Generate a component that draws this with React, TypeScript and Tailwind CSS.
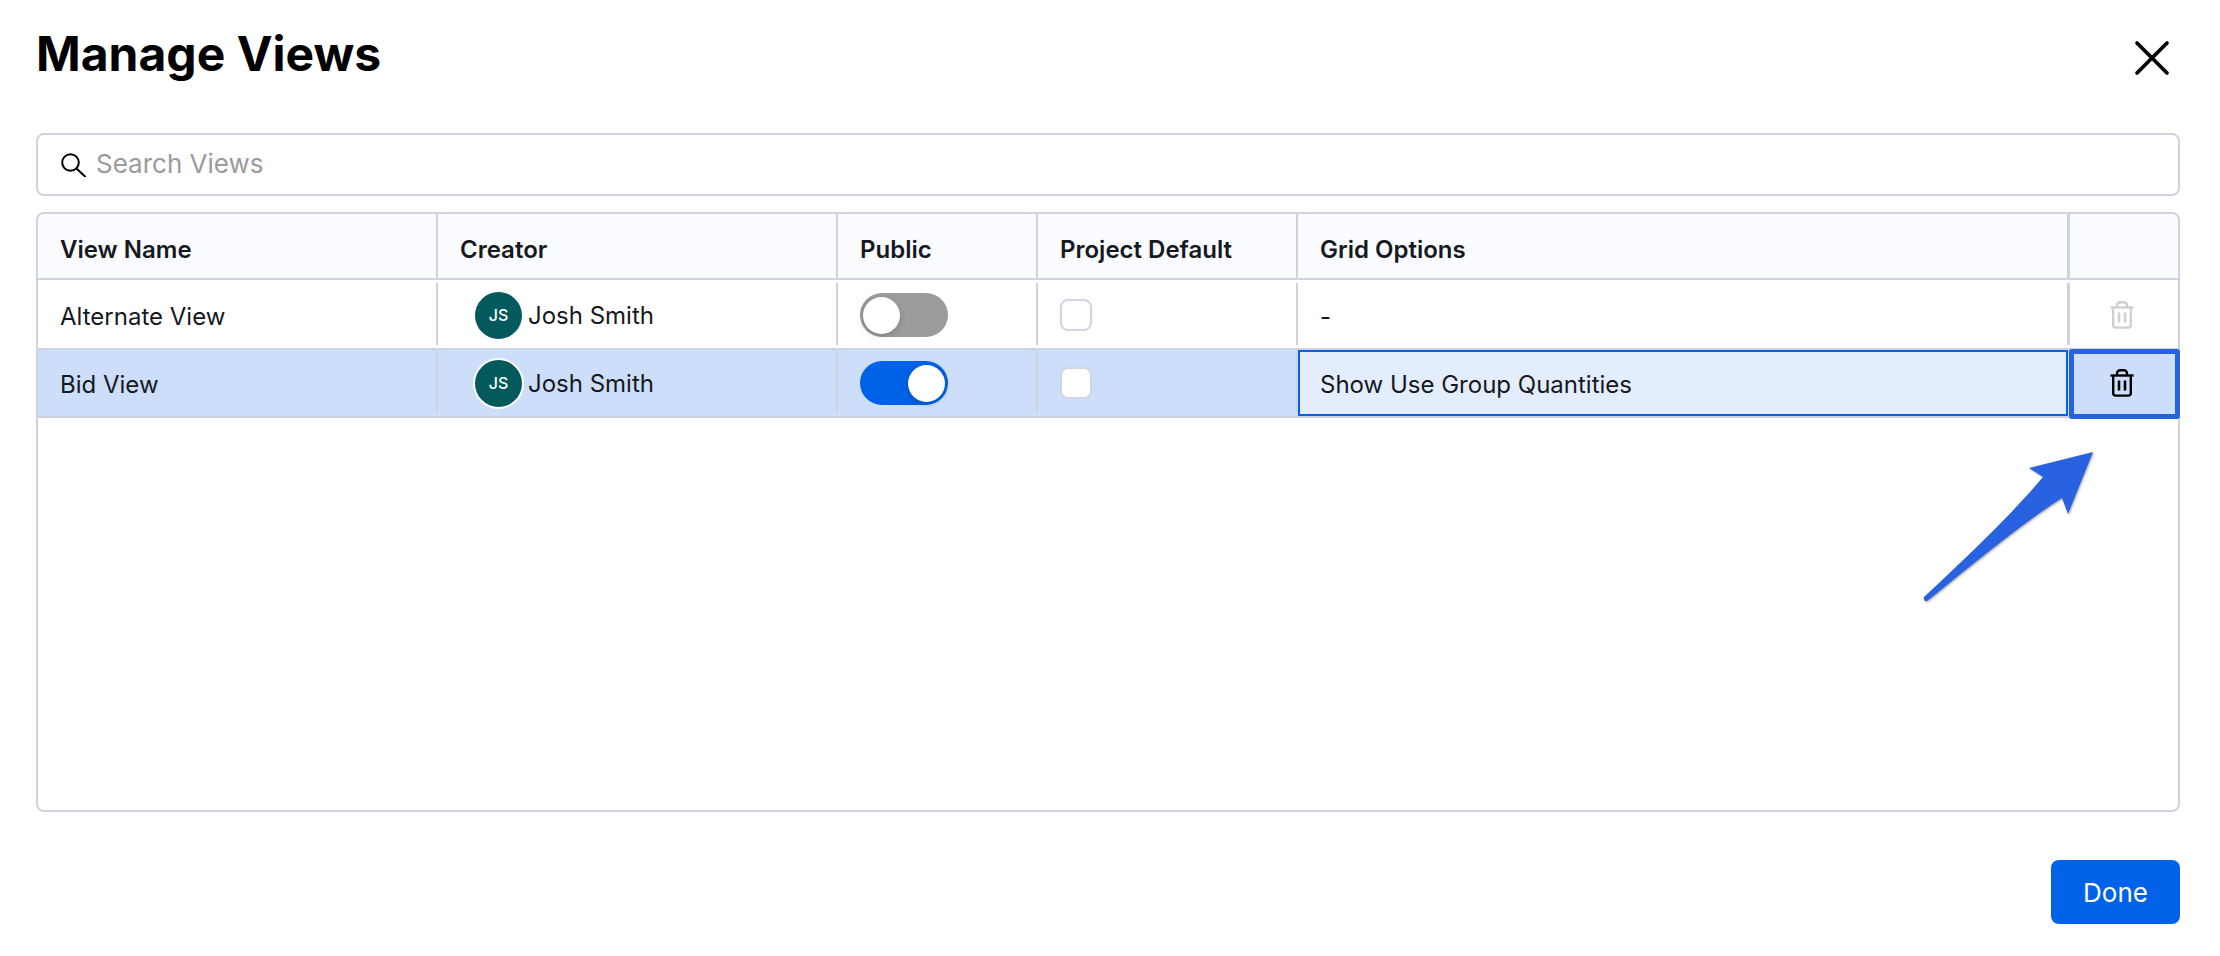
import { X } from 'lucide-react';

const rows = [
  { name: 'Alternate View', on: false, options: '-', selected: false },
  { name: 'Bid View', on: true, options: 'Show Use Group Quantities', selected: true },
];

const columns = 'grid grid-cols-[400px_400px_200px_260px_772px_1fr]';
const divider = 'border-r-2 border-[#cfd3dd]';

function TrashIcon({ className }: { className: string }) {
  return (
    <svg viewBox="0 0 24 28" fill="none" stroke="currentColor" strokeWidth="2.4" className={className}>
      <path d="M0.5 6.5h23" />
      <path d="M7 6V4.5C7 2.5 8.5 1.3 10 1.3h4c1.5 0 3 1.2 3 3.2V6" />
      <path d="M3.2 6.5V24c0 1.5 1 2.6 2.5 2.6h12.6c1.5 0 2.5-1.1 2.5-2.6V6.5" />
      <path d="M9 11.5v10M15 11.5v10" strokeWidth="2.6" />
    </svg>
  );
}

function SearchIcon() {
  return (
    <svg viewBox="0 0 25 24" fill="none" stroke="currentColor" strokeWidth="2" className="h-[24px] w-[25px] text-black">
      <circle cx="9.5" cy="9.5" r="8.3" />
      <path d="M15.5 15.5l8.5 8" strokeLinecap="round" />
    </svg>
  );
}

function Toggle({ on }: { on: boolean }) {
  return (
    <div
      className={`flex h-[44px] w-[88px] items-center rounded-full px-[3px] ${
        on ? 'justify-end bg-[#0062e8]' : 'justify-start bg-[#9c9c9c]'
      }`}
    >
      <div className="h-[37px] w-[37px] rounded-full bg-white shadow-[0_2px_6px_rgba(0,0,0,0.2)]" />
    </div>
  );
}

export default function App() {
  return (
    <main className="relative flex h-[956px] flex-col overflow-hidden bg-white pl-9 pr-10 font-['Inter',sans-serif] text-[24px] text-[#16191d]">
      <header className="flex h-[133px] shrink-0 items-start justify-between">
        <h1 className="mt-[25px] text-[48px] font-bold leading-[58px] text-black">Manage Views</h1>
        <X className="-mr-[2px] mt-[28px] h-[60px] w-[60px] text-black" strokeWidth={1.45} />
      </header>

      <div className="flex h-[63px] shrink-0 items-center gap-[10px] rounded-lg border-2 border-[#cfd3dd] pl-[23px]">
        <SearchIcon />
        <span className="pb-[2px] text-[26px] text-[#9a9a9a]">Search Views</span>
      </div>

      <section className="relative mt-[16px] h-[600px] shrink-0 rounded-lg border-2 border-[#cfd3dd]">
        <div className={`${columns} h-[66px] rounded-t-lg border-b-2 border-[#cfd3dd] bg-[#f9fbff] font-semibold`}>
          <div className={`flex items-center pl-[22px] pt-[8px] ${divider}`}>View Name</div>
          <div className={`flex items-center pl-[22px] pt-[8px] ${divider}`}>Creator</div>
          <div className={`flex items-center pl-[22px] pt-[8px] ${divider}`}>Public</div>
          <div className={`flex items-center pl-[22px] pt-[8px] ${divider}`}>Project Default</div>
          <div className="flex items-center border-r-[3px] border-[#cfd3dd] pl-[22px] pt-[8px]">Grid Options</div>
          <div />
        </div>

        {rows.map((row) => (
          <div
            key={row.name}
            className={`${columns} border-b-2 border-[#cfd3dd] ${row.selected ? 'h-[68px] bg-[#cddefa]' : 'h-[70px] bg-white'}`}
          >
            <div className={`my-[3px] flex items-center pl-[22px] ${row.selected ? 'pt-[3px]' : 'pt-[5px]'} ${divider}`}>
              {row.name}
            </div>
            <div
              className={`my-[3px] flex items-center gap-[6px] pl-[37px] ${row.selected ? 'pt-[1px]' : 'pt-[3px]'} ${divider}`}
            >
              <div
                className={`flex h-[47px] w-[47px] items-center justify-center rounded-full bg-[#03595c] pb-[2px] text-[16px] font-medium text-white ${
                  row.selected ? 'ring-2 ring-white' : ''
                }`}
              >
                JS
              </div>
              <span>Josh Smith</span>
            </div>
            <div className={`my-[3px] flex items-center pl-[22px] ${row.selected ? '' : 'pt-[2px]'} ${divider}`}>
              <Toggle on={row.on} />
            </div>
            <div className={`my-[3px] flex items-center pl-[22px] ${row.selected ? '' : 'pt-[2px]'} ${divider}`}>
              <div className="h-[32px] w-[32px] rounded-lg border-2 border-[#d2d6e3] bg-white" />
            </div>
            {row.selected ? (
              <div className="mr-[2px] flex items-center border-2 border-[#0062e8] bg-[#e3edfd] pl-[20px] pt-[3px]">
                {row.options}
              </div>
            ) : (
              <div className="my-[3px] flex items-center border-r-[3px] border-[#cfd3dd] pl-[22px] pt-[5px]">
                {row.options}
              </div>
            )}
            <div className={`relative flex items-center justify-center pr-[4px] ${row.selected ? '' : 'pt-[2px]'}`}>
              {row.selected && (
                <div className="absolute -bottom-[3px] -left-[1px] -right-[2px] -top-[1px] rounded-[3px] border-[5px] border-[#2962e0]" />
              )}
              <TrashIcon className={`relative h-[28px] w-[24px] ${row.selected ? 'text-black' : 'text-[#d0d0d0]'}`} />
            </div>
          </div>
        ))}
      </section>

      <div className="mt-[48px] flex justify-end">
        <button className="flex h-[64px] w-[129px] items-center justify-center rounded-lg bg-[#0062e8] text-[26px] text-white">
          Done
        </button>
      </div>

      <svg viewBox="0 0 180 170" className="absolute left-[1920px] top-[448px] h-[170px] w-[180px]">
        <path
          d="M173 4 L109 20 L123 29 C92 66 50 106 4 149 C3 151 5 154 7 153 C58 112 100 77 142 50 L148 66 Z"
          fill="#2962e0"
          className="drop-shadow-[1px_1px_1px_rgba(0,0,0,0.35)]"
        />
      </svg>
    </main>
  );
}
